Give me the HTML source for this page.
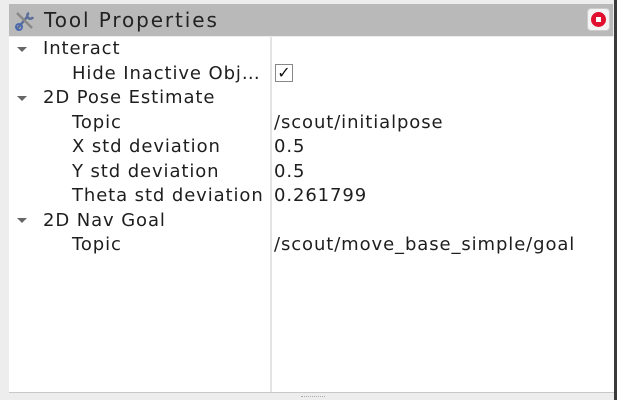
<!DOCTYPE html>
<html><head><style>
body{margin:0;width:617px;height:400px;background:#ededed;position:relative;overflow:hidden;font-family:"DejaVu Sans","Liberation Sans",sans-serif;}
#title{position:absolute;left:9px;top:4px;width:604px;height:32px;background:#b9b9b9;}
#title span{position:absolute;left:35px;top:4px;font-size:20px;letter-spacing:1.9px;color:#222;}
#panel{position:absolute;left:9px;top:37px;width:605px;height:355px;background:#fff;border-bottom:1px solid #c8c8c8;}
#div{position:absolute;left:261px;top:0;width:2px;height:355px;background:#e4e4e4;}
.r{position:absolute;font-size:18px;letter-spacing:0.9px;color:#1e1e1e;white-space:nowrap;line-height:22px;}
.t{position:absolute;width:0;height:0;border-left:5px solid transparent;border-right:5px solid transparent;border-top:5px solid #666;}
#rb{position:absolute;left:614px;top:0;width:3px;height:400px;background:#3a3a3a;}
</style></head><body>
<div id="rb"></div>
<div id="title">
<svg style="position:absolute;left:4px;top:5px" width="24" height="22" viewBox="0 0 24 22"><path d="M4 20 L14 8 M16 4 a3 3 0 1 0 4 4" stroke="#5b6e9a" stroke-width="2.5" fill="none"/><path d="M4 4 L19 19" stroke="#888" stroke-width="2.5"/><circle cx="6" cy="18" r="3" fill="none" stroke="#4a6ab0" stroke-width="2"/></svg>
<span>Tool Properties</span>
<div style="position:absolute;left:578px;top:4px;width:23px;height:23px;background:#f4f4f4;border-radius:4px;border:1px solid #ccc;box-sizing:border-box"><div style="position:absolute;left:3px;top:3px;width:15px;height:15px;border-radius:50%;background:#e0102e"></div><div style="position:absolute;left:8px;top:8px;width:5px;height:5px;background:#fff"></div></div>
</div>
<div id="panel"><div id="div"></div></div>
<div class="t" style="left:17px;top:47px"></div>
<div class="r" style="left:43px;top:38px">Interact</div>
<div class="r" style="left:72px;top:63px">Hide Inactive Obj…</div>
<div style="position:absolute;left:275px;top:64px;width:18px;height:18px;border:1px solid #888;box-sizing:border-box;background:#fff;font-size:16px;font-weight:bold;line-height:16px;text-align:center;color:#111">✓</div>
<div class="t" style="left:17px;top:96px"></div>
<div class="r" style="left:43px;top:87px">2D Pose Estimate</div>
<div class="r" style="left:72px;top:112px">Topic</div><div class="r" style="left:274px;top:112px">/scout/initialpose</div>
<div class="r" style="left:72px;top:136px">X std deviation</div><div class="r" style="left:274px;top:136px">0.5</div>
<div class="r" style="left:72px;top:161px">Y std deviation</div><div class="r" style="left:274px;top:161px">0.5</div>
<div class="r" style="left:72px;top:185px">Theta std deviation</div><div class="r" style="left:274px;top:185px">0.261799</div>
<div class="t" style="left:17px;top:218px"></div>
<div class="r" style="left:43px;top:210px">2D Nav Goal</div>
<div class="r" style="left:72px;top:234px">Topic</div><div class="r" style="left:274px;top:234px">/scout/move_base_simple/goal</div>
<div style="position:absolute;left:301px;top:396px;width:24px;height:1px;border-top:1px dotted #aaa"></div>
</body></html>
